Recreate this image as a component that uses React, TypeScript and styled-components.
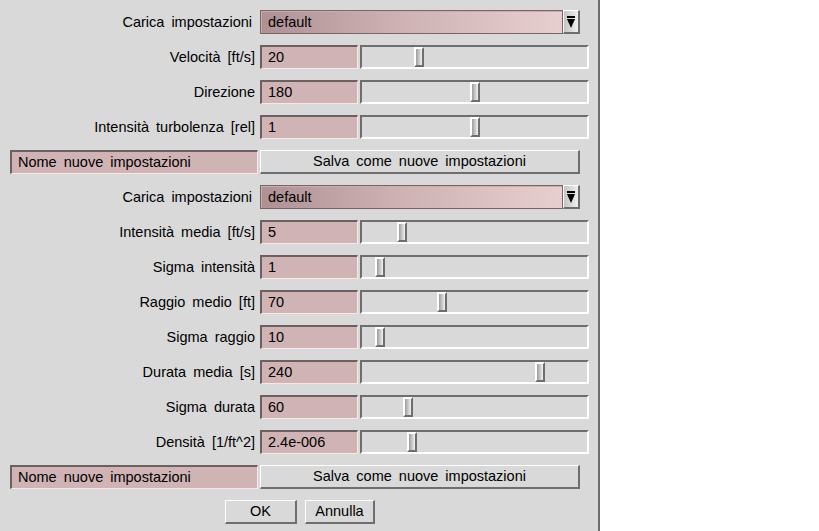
import styled, { createGlobalStyle } from "styled-components";

const GlobalStyle = createGlobalStyle`
    html, body {
        margin: 0;
        padding: 0;
        background: #ffffff;
    }
    body {
        font-family: "Liberation Sans", Arial, sans-serif;
        font-size: 14.5px;
        color: #000;
    }
`;

const Window = styled.div`
    width: 600px;
    height: 531px;
    box-sizing: border-box;
    background: #d9d9d9;
    border-right: 2px solid #6e6e6e;
    display: flex;
    flex-direction: column;
    gap: 11px;
    padding-top: 10px;
`;

const Row = styled.div`
    display: flex;
    align-items: stretch;
    height: 24px;
`;

const Label = styled.div<{ $pad?: number }>`
    width: 260px;
    box-sizing: border-box;
    padding-right: ${(p) => p.$pad ?? 5}px;
    text-align: right;
    line-height: 24px;
    word-spacing: 3px;
    white-space: nowrap;
`;

const Input = styled.div<{ $width: number }>`
    width: ${(p) => p.$width}px;
    box-sizing: border-box;
    background: #d0b3b4;
    border-style: solid;
    border-width: 2px 1px 1px 2px;
    border-color: #6d6061 #fbe6e6 #fbe6e6 #6d6061;
    padding: 0 6px;
    line-height: 21px;
    word-spacing: 3px;
    white-space: nowrap;
    overflow: hidden;
`;

const Choice = styled.div`
    width: 303px;
    box-sizing: border-box;
    border: 1px solid #7a6364;
    background: linear-gradient(to right, #ae9194 0%, #cdb1b3 45%, #e8cfcf 100%);
    box-shadow: inset 1px 1px 0 #c9aeb0;
    padding: 0 7px;
    line-height: 22px;
`;

const ArrowButton = styled.div`
    width: 17px;
    box-sizing: border-box;
    border-style: solid;
    border-width: 1px 2px 2px 1px;
    border-color: #ffffff #6e6e6e #6e6e6e #ffffff;
    background: linear-gradient(to right, #c4c4c4, #efefef);
    display: flex;
    align-items: center;
    justify-content: center;
`;

const Slider = styled.div`
    position: relative;
    margin-left: 2px;
    width: 229px;
    box-sizing: border-box;
    background: #d9d9d9;
    border-style: solid;
    border-width: 2px;
    border-color: #6e6e6e #ffffff #ffffff #6e6e6e;
`;

const Thumb = styled.div`
    position: absolute;
    top: 0;
    bottom: 0;
    width: 10px;
    box-sizing: border-box;
    border-style: solid;
    border-width: 2px;
    border-color: #ffffff #6e6e6e #6e6e6e #ffffff;
    background: linear-gradient(to right, #9c9c9c, #f2f2f2);
`;

const Button = styled.div<{ $width: number }>`
    width: ${(p) => p.$width}px;
    box-sizing: border-box;
    background: #d9d9d9;
    border-style: solid;
    border-width: 1px 2px 2px 1px;
    border-color: #ffffff #6e6e6e #6e6e6e #ffffff;
    text-align: center;
    line-height: 21px;
    word-spacing: 3px;
    white-space: nowrap;
`;

const NameRow = styled(Row)`
    padding-left: 10px;
    gap: 2px;
`;

const ButtonRow = styled(Row)`
    padding-left: 225px;
    gap: 8px;
`;

const ChoiceArrow = () => (
    <svg width="8" height="14" viewBox="0 0 8 14">
        <rect x="0" y="1" width="8" height="2" fill="#000" />
        <polygon points="0,4 8,4 4,13" fill="#000" />
    </svg>
);

type SliderRow = {
    label: string;
    value: string;
    // thumb offset inside the track, 0..1
    pos: number;
};

const windRows: SliderRow[] = [
    { label: "Velocità [ft/s]", value: "20", pos: 0.242 },
    { label: "Direzione", value: "180", pos: 0.5 },
    { label: "Intensità turbolenza [rel]", value: "1", pos: 0.5 },
];

const gustRows: SliderRow[] = [
    { label: "Intensità media [ft/s]", value: "5", pos: 0.163 },
    { label: "Sigma intensità", value: "1", pos: 0.06 },
    { label: "Raggio medio [ft]", value: "70", pos: 0.349 },
    { label: "Sigma raggio", value: "10", pos: 0.06 },
    { label: "Durata media [s]", value: "240", pos: 0.805 },
    { label: "Sigma durata", value: "60", pos: 0.191 },
    { label: "Densità [1/ft^2]", value: "2.4e-006", pos: 0.209 },
];

const TRAVEL = 215;

const ValueSlider = ({ label, value, pos }: SliderRow) => (
    <Row>
        <Label>{label}</Label>
        <Input $width={98}>{value}</Input>
        <Slider>
            <Thumb style={{ left: `${Math.round(pos * TRAVEL)}px` }} />
        </Slider>
    </Row>
);

const PresetChoice = () => (
    <Row>
        <Label $pad={8}>Carica impostazioni</Label>
        <Choice>default</Choice>
        <ArrowButton>
            <ChoiceArrow />
        </ArrowButton>
    </Row>
);

const SavePreset = () => (
    <NameRow>
        <Input $width={248}>Nome nuove impostazioni</Input>
        <Button $width={320}>Salva come nuove impostazioni</Button>
    </NameRow>
);

const App = () => (
    <>
        <GlobalStyle />
        <Window>
            <PresetChoice />
            {windRows.map((r) => (
                <ValueSlider key={r.label} {...r} />
            ))}
            <SavePreset />
            <PresetChoice />
            {gustRows.map((r) => (
                <ValueSlider key={r.label} {...r} />
            ))}
            <SavePreset />
            <ButtonRow>
                <Button $width={72}>OK</Button>
                <Button $width={70}>Annulla</Button>
            </ButtonRow>
        </Window>
    </>
);

export default App;
